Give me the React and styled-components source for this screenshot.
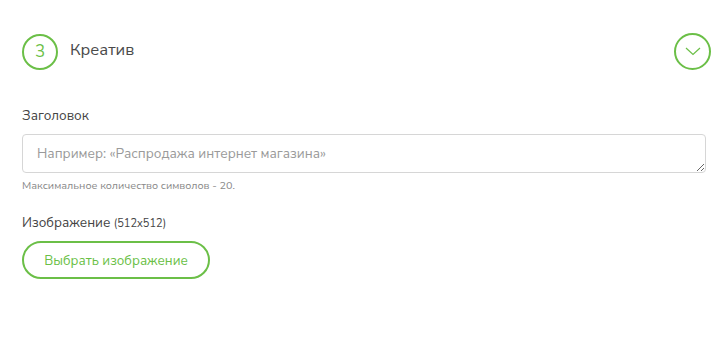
import styled, { createGlobalStyle } from "styled-components";

const green = "#6bbf47";

const Global = createGlobalStyle`
  body {
    margin: 0;
    background: #fff;
    font-family: "Nunito Sans", "Open Sans", "Noto Sans", sans-serif;
  }
`;

const Section = styled.div`
  padding: 33px 19px 0 22px;
`;

const Header = styled.div`
  display: flex;
  align-items: center;
  justify-content: space-between;
  height: 37px;
`;

const Title = styled.div`
  display: flex;
  align-items: center;
  gap: 12px;
`;

const Step = styled.div`
  width: 36px;
  height: 36px;
  box-sizing: border-box;
  border: 2px solid ${green};
  border-radius: 50%;
  display: flex;
  align-items: center;
  justify-content: center;
  color: ${green};
  font-size: 17px;
`;

const Name = styled.div`
  font-size: 16.5px;
  color: #4a4a4a;
  margin-top: -4px;
`;

const Toggle = styled.button`
  width: 37px;
  height: 37px;
  margin-right: -5px;
  box-sizing: border-box;
  border: 2px solid ${green};
  border-radius: 50%;
  background: none;
  padding: 0;
  display: flex;
  align-items: center;
  justify-content: center;
`;

const Field = styled.div`
  margin-top: ${(p) => p.$top}px;
`;

const Label = styled.div`
  font-size: 13.5px;
  color: #444;
  margin-bottom: 9px;
`;

const Small = styled.span`
  font-size: 11px;
`;

const Input = styled.textarea`
  display: block;
  width: 100%;
  height: 39px;
  box-sizing: border-box;
  border: 1px solid #d6d6d6;
  border-radius: 4px;
  padding: 9px 14px;
  font-family: inherit;
  font-size: 13.6px;
  color: #333;
  resize: vertical;
  &::placeholder {
    color: #9a9a9a;
  }
`;

const Hint = styled.div`
  font-size: 10.8px;
  color: #8a8a8a;
  margin-top: 5px;
`;

const Choose = styled.button`
  height: 38px;
  width: 188px;
  padding: 0;
  white-space: nowrap;
  border: 2px solid ${green};
  border-radius: 19px;
  background: #fff;
  color: ${green};
  font-family: inherit;
  font-size: 13.4px;
  box-sizing: border-box;
`;

export default function App() {
  return (
    <>
      <Global />
      <Section>
        <Header>
          <Title>
            <Step>3</Step>
            <Name>Креатив</Name>
          </Title>
          <Toggle>
            <svg width="16" height="9" viewBox="0 0 16 9">
              <path d="M1 1l7 6.5 7-6.5" fill="none" stroke={green} strokeWidth="1.2" />
            </svg>
          </Toggle>
        </Header>
        <Field $top={36}>
          <Label>Заголовок</Label>
          <Input placeholder="Например: «Распродажа интернет магазина»" />
          <Hint>Максимальное количество символов - 20.</Hint>
        </Field>
        <Field $top={20}>
          <Label>
            Изображение <Small>(512x512)</Small>
          </Label>
          <Choose>Выбрать изображение</Choose>
        </Field>
      </Section>
    </>
  );
}
